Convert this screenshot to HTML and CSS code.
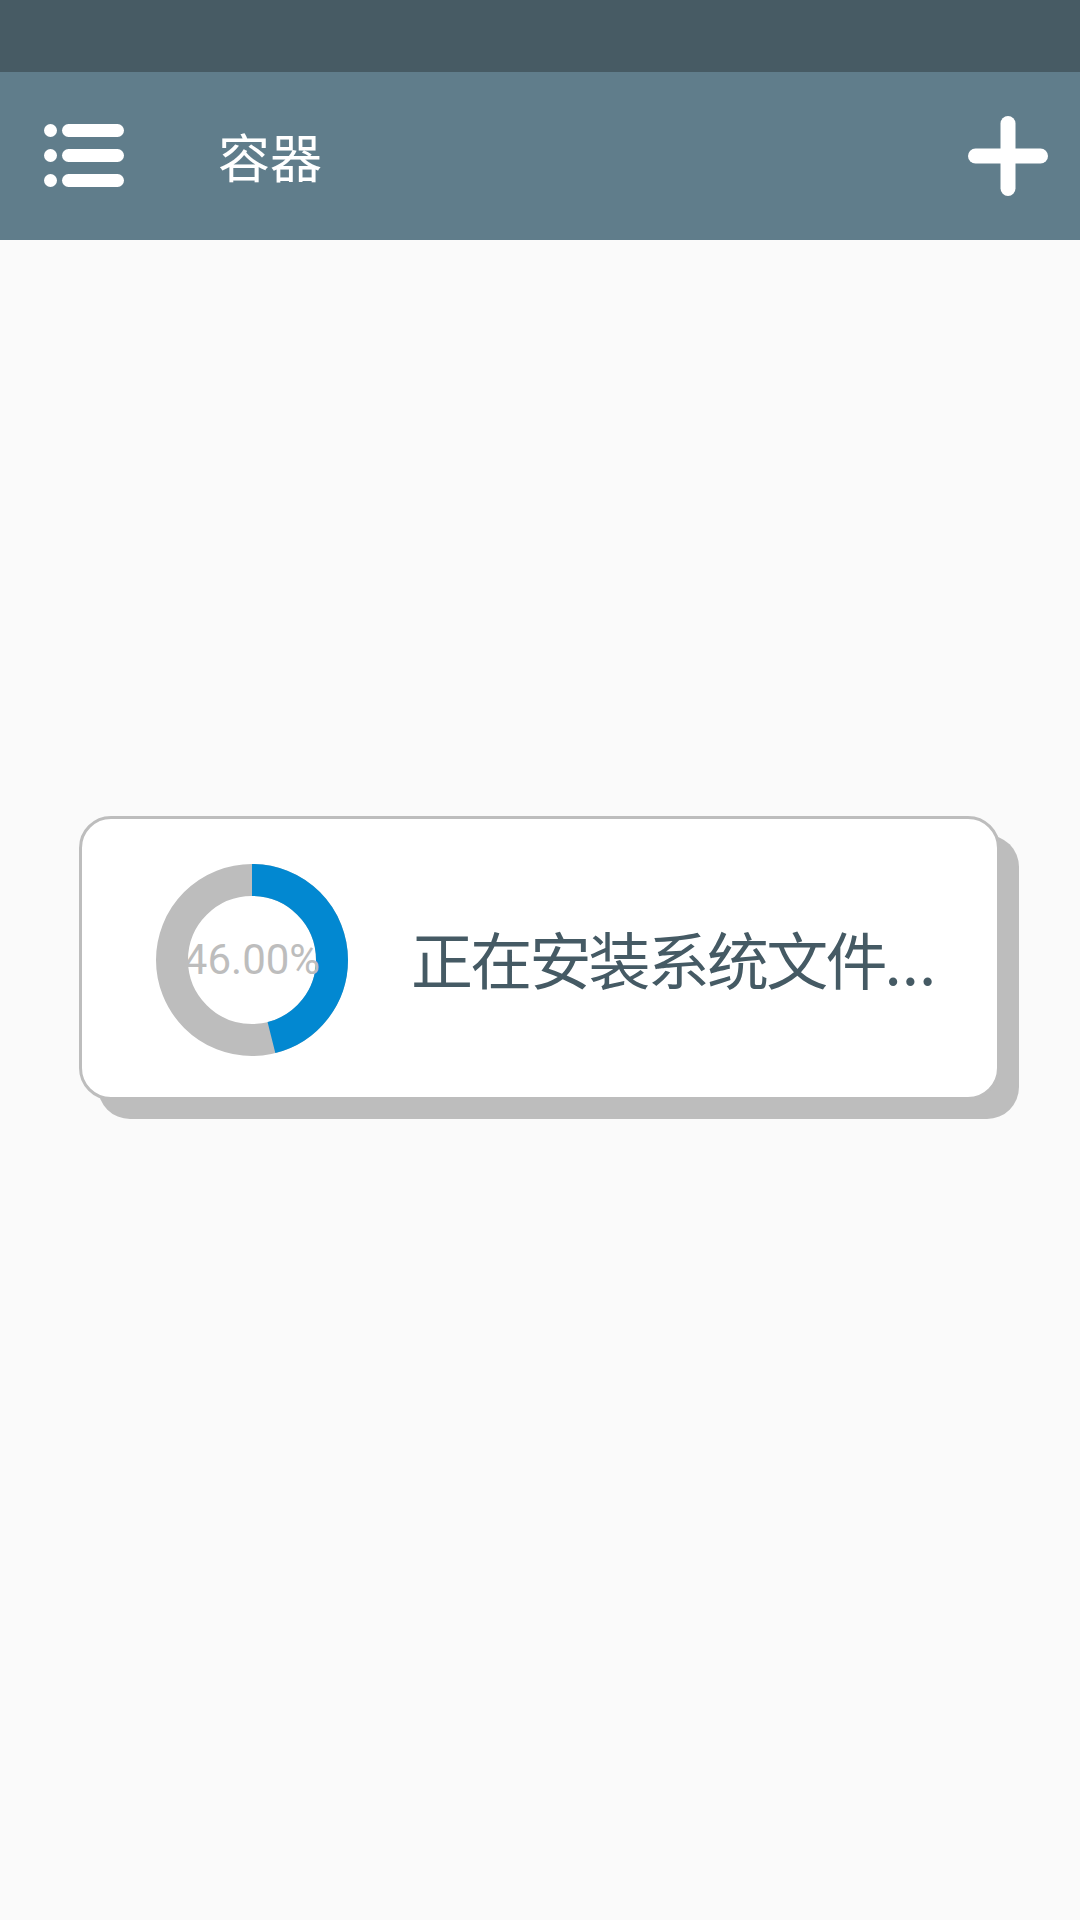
FILE: index.html
```html
<!DOCTYPE html>
<html>
<head>
    <title>容器</title>
    <link rel="stylesheet" href="styles.css">
</head>
<body>
    <div class="status-bar"></div>

    <div class="toolbar">
        <svg class="menu-icon" width="90" height="80" viewBox="0 0 90 80">
            <g fill="#ffffff">
                <circle cx="10.5" cy="14.5" r="6.5"/>
                <circle cx="10.5" cy="39.5" r="6.5"/>
                <circle cx="10.5" cy="64.5" r="6.5"/>
            </g>
            <g stroke="#ffffff" stroke-width="13" stroke-linecap="round">
                <line x1="28.5" y1="14.5" x2="77.5" y2="14.5"/>
                <line x1="28.5" y1="39.5" x2="77.5" y2="39.5"/>
                <line x1="28.5" y1="64.5" x2="77.5" y2="64.5"/>
            </g>
        </svg>
        <span class="title">容器</span>
        <svg class="add-icon" width="80" height="80" viewBox="0 0 80 80">
            <g stroke="#ffffff" stroke-width="15" stroke-linecap="round">
                <line x1="40" y1="7.5" x2="40" y2="72.5"/>
                <line x1="7.5" y1="40" x2="72.5" y2="40"/>
            </g>
        </svg>
    </div>

    <div class="content">
        <div class="progress-card">
            <div class="donut">
                <svg width="192" height="192" viewBox="0 0 192 192">
                    <circle cx="96" cy="96" r="80" fill="none" stroke="#bdbdbd" stroke-width="32"/>
                    <circle cx="96" cy="96" r="80" fill="none" stroke="#0288d1" stroke-width="32"
                            stroke-dasharray="231.22 502.65" transform="rotate(-90 96 96)"/>
                </svg>
                <span class="donut-label">46.00%</span>
            </div>
            <span class="progress-text">正在安装系统文件<span class="dots">...</span></span>
        </div>
    </div>
</body>
</html>
```

FILE: styles.css
```css
body {
    margin: 0;
    width: 1080px;
    height: 1920px;
    background-color: #fafafa;
    font-family: Roboto, "Noto Sans CJK SC", sans-serif;
    overflow: hidden;
}
.status-bar {
    height: 72px;
    background-color: #475b64;
}
.toolbar {
    height: 168px;
    background-color: #607d8b;
    display: flex;
    align-items: center;
    padding: 0 32px 0 40px;
}
.menu-icon {
    display: block;
}
.title {
    margin-left: 88px;
    color: #ffffff;
    font-family: "Noto Sans CJK SC", sans-serif;
    font-size: 52px;
    line-height: 1;
}
.add-icon {
    display: block;
    margin-left: auto;
}
.content {
    padding: 576px 0 0 79px;
}
.progress-card {
    box-sizing: border-box;
    width: 921px;
    height: 284px;
    background-color: #ffffff;
    border: 3px solid #bdbdbd;
    border-radius: 32px;
    box-shadow: 19px 19px 0 #bdbdbd;
    display: flex;
    align-items: center;
    padding-left: 74px;
}
.donut {
    position: relative;
    flex-shrink: 0;
    width: 192px;
    height: 192px;
    margin-top: 4px;
}
.donut svg {
    display: block;
}
.donut-label {
    position: absolute; /* sits over the ring */
    left: 0;
    right: 0;
    top: 50%;
    transform: translateY(-50%);
    text-align: center;
    color: #bdbdbd;
    font-family: Roboto, sans-serif;
    font-size: 42px;
    line-height: 1;
}
.progress-text {
    margin-left: 63px;
    color: #455a64;
    font-family: "Noto Sans CJK SC", sans-serif;
    font-size: 62px;
    letter-spacing: -2.8px;
    line-height: 1;
    white-space: nowrap;
}
.dots {
    letter-spacing: 0;
}
```
